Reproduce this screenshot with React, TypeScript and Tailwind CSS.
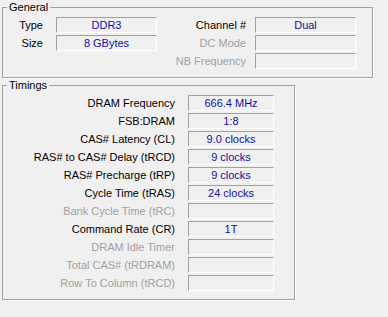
const FONT = "font-['Liberation_Sans',Arial,sans-serif]";

type Row = { label: string; value?: string; enabled: boolean };

const timings: Row[] = [
  { label: "DRAM Frequency", value: "666.4 MHz", enabled: true },
  { label: "FSB:DRAM", value: "1:8", enabled: true },
  { label: "CAS# Latency (CL)", value: "9.0 clocks", enabled: true },
  { label: "RAS# to CAS# Delay (tRCD)", value: "9 clocks", enabled: true },
  { label: "RAS# Precharge (tRP)", value: "9 clocks", enabled: true },
  { label: "Cycle Time (tRAS)", value: "24 clocks", enabled: true },
  { label: "Bank Cycle Time (tRC)", enabled: false },
  { label: "Command Rate (CR)", value: "1T", enabled: true },
  { label: "DRAM Idle Timer", enabled: false },
  { label: "Total CAS# (tRDRAM)", enabled: false },
  { label: "Row To Column (tRCD)", enabled: false },
];

function Field({ value, width }: { value?: string; width: string }) {
  return (
    <div
      className={`${width} h-[16px] border border-t-[#a0a0a0] border-l-[#a0a0a0] border-b-white border-r-white text-center text-[11px] leading-[14px] text-[#10109a]`}
    >
      {value}
    </div>
  );
}

function Label({ text, enabled, cls }: { text: string; enabled: boolean; cls: string }) {
  return (
    <div
      className={`${cls} h-[16px] text-right text-[11px] leading-[16px] whitespace-nowrap ${
        enabled ? "text-black" : "text-[#a0a0a0]"
      }`}
    >
      {text}
    </div>
  );
}

function Group({ title, cls, children }: { title: string; cls: string; children: React.ReactNode }) {
  return (
    <div className={`relative ml-[2px] border border-[#a0a0a0] shadow-[1px_1px_0_#ffffff] ${cls}`}>
      <span className="absolute left-[4px] top-[-7px] bg-[#f0f0f0] px-[2px] text-[11px] leading-[13px] text-black">
        {title}
      </span>
      {children}
    </div>
  );
}

export default function App() {
  return (
    <div className={`${FONT} w-[388px] h-[317px] bg-[#f0f0f0] pt-[7px] overflow-hidden`}>
      {/* General */}
      <Group title="General" cls="w-[371px] h-[71px]">
        <div className="mt-[9px] flex flex-col gap-[2px]">
          <div className="flex">
            <Label text="Type" enabled cls="w-[53px] pr-[13px]" />
            <Field value="DDR3" width="w-[101px]" />
            <Label text="Channel #" enabled cls="w-[98px] pr-[9px]" />
            <Field value="Dual" width="w-[101px]" />
          </div>
          <div className="flex">
            <Label text="Size" enabled cls="w-[53px] pr-[13px]" />
            <Field value="8 GBytes" width="w-[101px]" />
            <Label text="DC Mode" enabled={false} cls="w-[98px] pr-[9px]" />
            <Field width="w-[101px]" />
          </div>
          <div className="flex">
            <div className="w-[154px]" />
            <Label text="NB Frequency" enabled={false} cls="w-[98px] pr-[9px]" />
            <Field width="w-[101px]" />
          </div>
        </div>
      </Group>

      {/* Timings */}
      <Group title="Timings" cls="mt-[7px] w-[293px] h-[215px]">
        <div className="mt-[9px] flex flex-col gap-[2px]">
          {timings.map((t) => (
            <div key={t.label} className="flex">
              <Label text={t.label} enabled={t.enabled} cls="w-[185px] pr-[13px]" />
              <Field value={t.value} width="w-[86px]" />
            </div>
          ))}
        </div>
      </Group>
    </div>
  );
}
